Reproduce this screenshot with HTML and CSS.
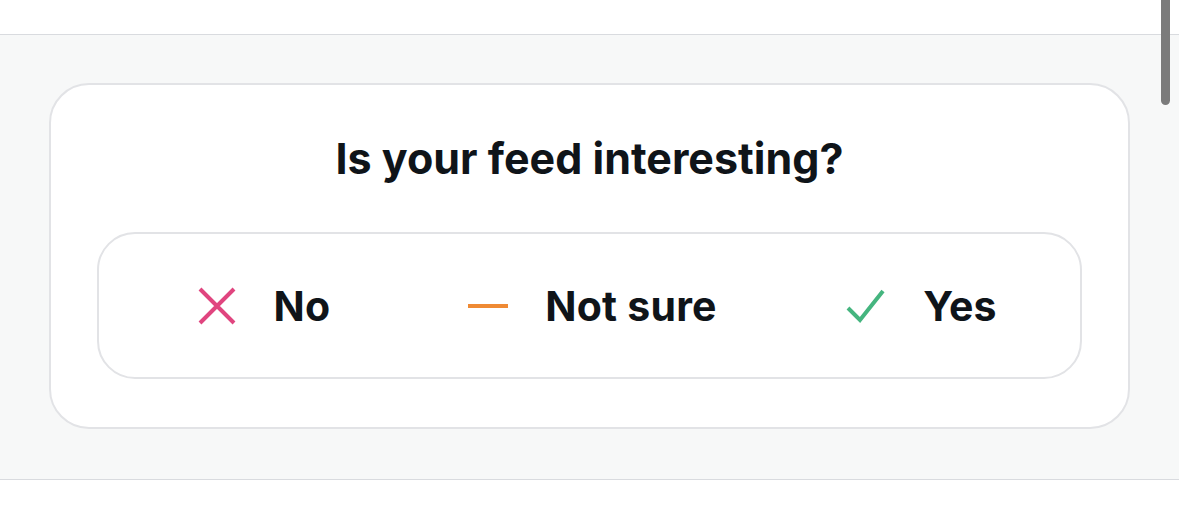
FILE: index.html
```html
<!DOCTYPE html>
<html lang="en">
<head>
<meta charset="utf-8">
<title>Is your feed interesting?</title>
<link rel="stylesheet" href="styles.css">
</head>
<body>
<div class="top"></div>
<section class="band">
  <div class="card">
    <h2 class="title">Is your feed interesting?</h2>
    <div class="choices">
      <button class="choice">
        <svg class="icon" viewBox="0 0 40 40"><path d="M3 3 L37 37 M37 3 L3 37" stroke="#e0457f" stroke-width="4" fill="none"/></svg>
        <span>No</span>
      </button>
      <button class="choice">
        <svg class="icon" viewBox="0 0 40 40"><path d="M0 20 H40" stroke="#ef8a34" stroke-width="4" fill="none"/></svg>
        <span>Not sure</span>
      </button>
      <button class="choice">
        <svg class="icon" viewBox="0 0 40 40"><path d="M2 22 L14 34 L37 5" stroke="#45b57f" stroke-width="4" fill="none"/></svg>
        <span>Yes</span>
      </button>
    </div>
  </div>
</section>
<div class="bottom"></div>
<div class="scrollbar"></div>
</body>
</html>
```

FILE: styles.css
```css
* { box-sizing: border-box; }
html, body { margin: 0; padding: 0; background: #ffffff; }
body {
  font-family: Inter, "Noto Sans", sans-serif;
  color: #0f1419;
  width: 1179px;
  height: 508px;
  overflow: hidden;
  position: relative;
}
.top { height: 34px; }
.band {
  background: #f7f8f8;
  border-top: 1px solid #d9dbdf;
  border-bottom: 1px solid #d9dbdf;
  padding: 48px 49px 50px 49px;
  width: 1179px;
}
.card {
  width: 1081px;
  background: #ffffff;
  border: 2px solid #e2e3e6;
  border-radius: 40px;
  padding: 47px 46px 48px 46px;
}
.title {
  margin: 0 0 48px 0;
  text-align: center;
  font-size: 43px;
  font-weight: 700;
  line-height: 52px;
  letter-spacing: 0;
}
.choices {
  display: grid;
  grid-template-columns: repeat(3, 329px);
  border: 2px solid #e2e3e6;
  border-radius: 38px;
  height: 147px;
  align-items: center;
}
.choice {
  display: flex;
  align-items: center;
  justify-content: center;
  gap: 37px;
  background: none;
  border: 0;
  padding: 0;
  font-family: inherit;
  color: #0f1419;
  font-size: 41px;
  font-weight: 700;
  letter-spacing: 0.2px;
}
.icon { width: 40px; height: 40px; flex: none; }
.scrollbar {
  position: absolute;
  top: 0;
  left: 1161px;
  width: 9px;
  height: 105px;
  background: #7b7b7b;
  border-radius: 0 0 5px 5px;
}
```
